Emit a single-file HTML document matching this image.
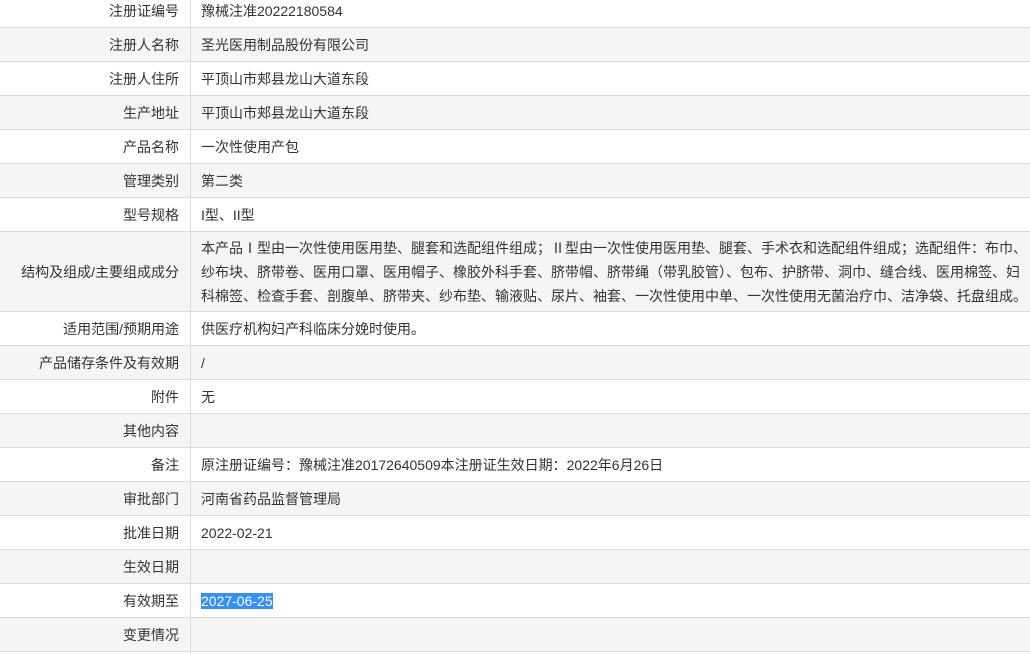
<!DOCTYPE html>
<html><head><meta charset="utf-8"><style>
html,body{margin:0;padding:0;background:#fff;width:1030px;height:654px;overflow:hidden;position:relative}
body{font-family:"Liberation Sans","Noto Sans CJK SC",sans-serif;font-size:14px;color:#333}
.r{position:absolute;left:0;width:1030px;height:34px;border-bottom:1px solid #dcdcdc;box-sizing:border-box;display:flex}
.g{background:#f5f5f5}
.l{width:191px;border-right:1px solid #dcdcdc;text-align:right;padding-right:11px;box-sizing:border-box;display:flex;align-items:center;justify-content:flex-end}
.v{flex:1;padding-left:10px;display:flex;align-items:center;white-space:nowrap}
.t .v{line-height:24px;display:block;padding-top:4px}
.sel{background:#3390ff;color:#fff}
</style></head><body>
<div class="r" style="top:-6px"><div class="l">注册证编号</div><div class="v">豫械注准20222180584</div></div>
<div class="r g" style="top:28px"><div class="l">注册人名称</div><div class="v">圣光医用制品股份有限公司</div></div>
<div class="r" style="top:62px"><div class="l">注册人住所</div><div class="v">平顶山市郏县龙山大道东段</div></div>
<div class="r g" style="top:96px"><div class="l">生产地址</div><div class="v">平顶山市郏县龙山大道东段</div></div>
<div class="r" style="top:130px"><div class="l">产品名称</div><div class="v">一次性使用产包</div></div>
<div class="r g" style="top:164px"><div class="l">管理类别</div><div class="v">第二类</div></div>
<div class="r" style="top:198px"><div class="l">型号规格</div><div class="v">I型、II型</div></div>
<div class="r g t" style="top:232px;height:80px"><div class="l">结构及组成/主要组成成分</div><div class="v">本产品Ⅰ型由一次性使用医用垫、腿套和选配组件组成；Ⅱ型由一次性使用医用垫、腿套、手术衣和选配组件组成；选配组件：布巾、<br>纱布块、脐带卷、医用口罩、医用帽子、橡胶外科手套、脐带帽、脐带绳（带乳胶管）、包布、护脐带、洞巾、缝合线、医用棉签、妇<br>科棉签、检查手套、剖腹单、脐带夹、纱布垫、输液贴、尿片、袖套、一次性使用中单、一次性使用无菌治疗巾、洁净袋、托盘组成。</div></div>
<div class="r" style="top:312px"><div class="l">适用范围/预期用途</div><div class="v">供医疗机构妇产科临床分娩时使用。</div></div>
<div class="r g" style="top:346px"><div class="l">产品储存条件及有效期</div><div class="v">/</div></div>
<div class="r" style="top:380px"><div class="l">附件</div><div class="v">无</div></div>
<div class="r g" style="top:414px"><div class="l">其他内容</div><div class="v"></div></div>
<div class="r" style="top:448px"><div class="l">备注</div><div class="v">原注册证编号：豫械注准20172640509本注册证生效日期：2022年6月26日</div></div>
<div class="r g" style="top:482px"><div class="l">审批部门</div><div class="v">河南省药品监督管理局</div></div>
<div class="r" style="top:516px"><div class="l">批准日期</div><div class="v">2022-02-21</div></div>
<div class="r g" style="top:550px"><div class="l">生效日期</div><div class="v"></div></div>
<div class="r" style="top:584px"><div class="l">有效期至</div><div class="v"><span class="sel">2027-06-25</span></div></div>
<div class="r g" style="top:618px"><div class="l">变更情况</div><div class="v"></div></div>
<div class="r" style="top:652px"><div class="l"></div><div class="v"></div></div>
</body></html>
